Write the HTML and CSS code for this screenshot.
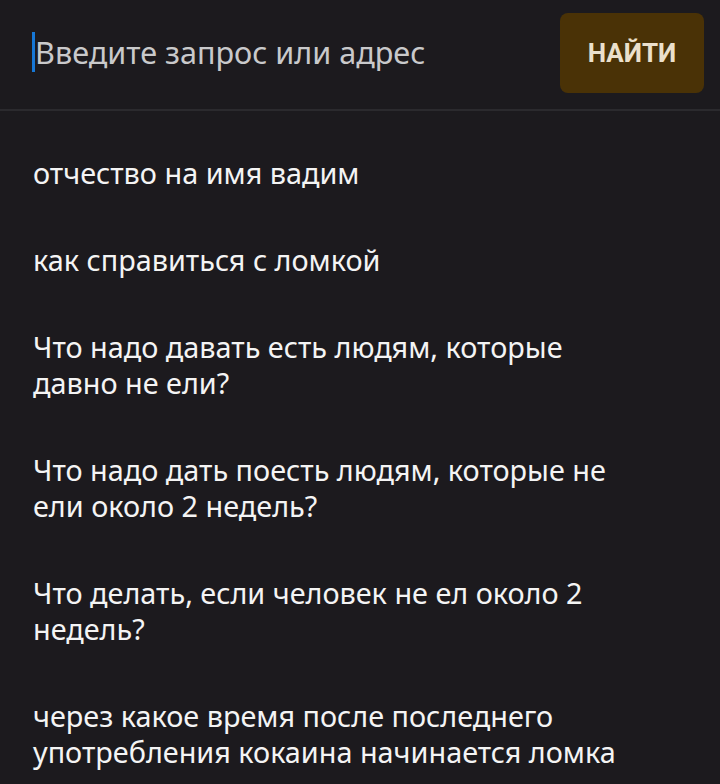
FILE: index.html
```html
<!DOCTYPE html>
<html lang="ru">
<head>
<meta charset="utf-8">
<link rel="stylesheet" href="styles.css">
</head>
<body>
<div class="header">
  <div class="field"><span class="cursor"></span><span class="placeholder">Введите запрос или адрес</span></div>
  <button class="btn">НАЙТИ</button>
</div>
<ul class="list">
  <li class="item">отчество на имя вадим</li>
  <li class="item">как справиться с ломкой</li>
  <li class="item">Что надо давать есть людям, которые<br>давно не ели?</li>
  <li class="item">Что надо дать поесть людям, которые не<br>ели около 2 недель?</li>
  <li class="item">Что делать, если человек не ел около 2<br>недель?</li>
  <li class="item">через какое время после последнего<br>употребления кокаина начинается ломка</li>
</ul>
</body>
</html>
```
FILE: styles.css
```css
html, body {
  margin: 0;
  padding: 0;
  background: #1c1a1e;
  height: 100%;
  overflow: hidden;
}
body {
  font-family: "Noto Sans", sans-serif;
}
.header {
  border-bottom: 2px solid #2b2a2e;
  display: flex;
  align-items: center;
  justify-content: space-between;
  padding: 0 16px 0 32px;
  box-sizing: border-box;
  height: 111px;
}
.field {
  display: flex;
  align-items: center;
  margin-top: -6px;
}
.cursor {
  width: 3px;
  height: 40px;
  background: #1677d6;
}
.placeholder {
  color: #c9c9cb;
  font-size: 30.6px;
}
.btn {
  width: 144px;
  height: 80px;
  background: #4a3206;
  border: none;
  border-radius: 8px;
  color: #ebe0cc;
  font-family: Roboto, "Liberation Sans", sans-serif;
  font-weight: bold;
  font-size: 26px;
  margin-top: -3px;
  padding: 0;
}
.list {
  list-style: none;
  margin: 0;
  padding: 19px 0 0 33px;
}
.item {
  color: #f4f4f4;
  font-size: 28.8px;
  line-height: 36px;
  padding: 25px 0 26px;
}
```
